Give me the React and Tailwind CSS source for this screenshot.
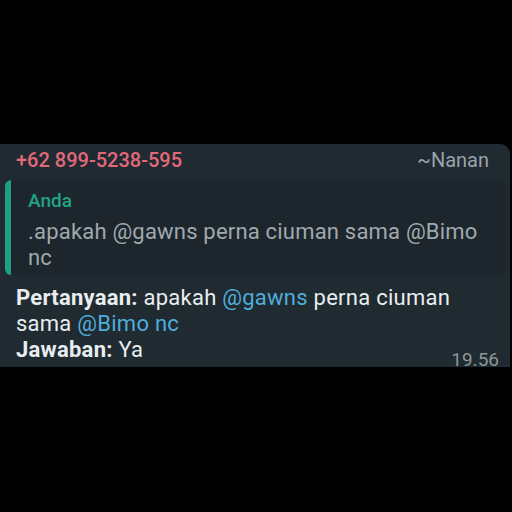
export default function App() {
  const font = { fontFamily: 'Roboto, "Noto Sans", sans-serif' };
  return (
    <div className="w-[512px] h-[512px] bg-black pt-[144px]" style={font}>
      <div className="relative w-[510px] h-[223px] bg-[#1f2a31] rounded-tr-[10px] flex flex-col">
        <div className="flex justify-between pl-[16px] pr-[21px] pt-[4px] text-[20px] leading-[24px]">
          <span className="text-[#e3697a] font-medium">+62 899-5238-595</span>
          <span className="text-[#9aa3a8]">~Nanan</span>
        </div>
        <div className="mt-[8px] ml-[5px] mr-[5px] h-[95px] bg-[#1c262c] rounded-[6px] flex">
          <div className="w-[6px] bg-[#1fa07f] rounded-l-[6px]" />
          <div className="pl-[17px] pt-[9px] w-[475px]">
            <div className="text-[#21a384] font-medium text-[19px] leading-[24px]">Anda</div>
            <div className="text-[#a0a9ae] text-[22px] leading-[26px] tracking-[0.2px] mt-[6px] w-[458px]">
              .apakah @gawns perna ciuman sama @Bimo nc
            </div>
          </div>
        </div>
        <div className="pl-[16px] pr-[20px] pt-[10px] text-[#e9edef] text-[22px] leading-[26px] tracking-[0.25px]">
          <div>
            <span className="font-bold">Pertanyaan:</span> apakah{" "}
            <span className="text-[#4eaedb]">@gawns</span> perna ciuman sama{" "}
            <span className="text-[#4eaedb]">@Bimo nc</span>
          </div>
          <div>
            <span className="font-bold">Jawaban:</span> Ya
          </div>
        </div>
        <span className="absolute right-[11px] bottom-[-5px] text-[19px] leading-[24px] text-[#8b959a]">19.56</span>
      </div>
    </div>
  );
}
